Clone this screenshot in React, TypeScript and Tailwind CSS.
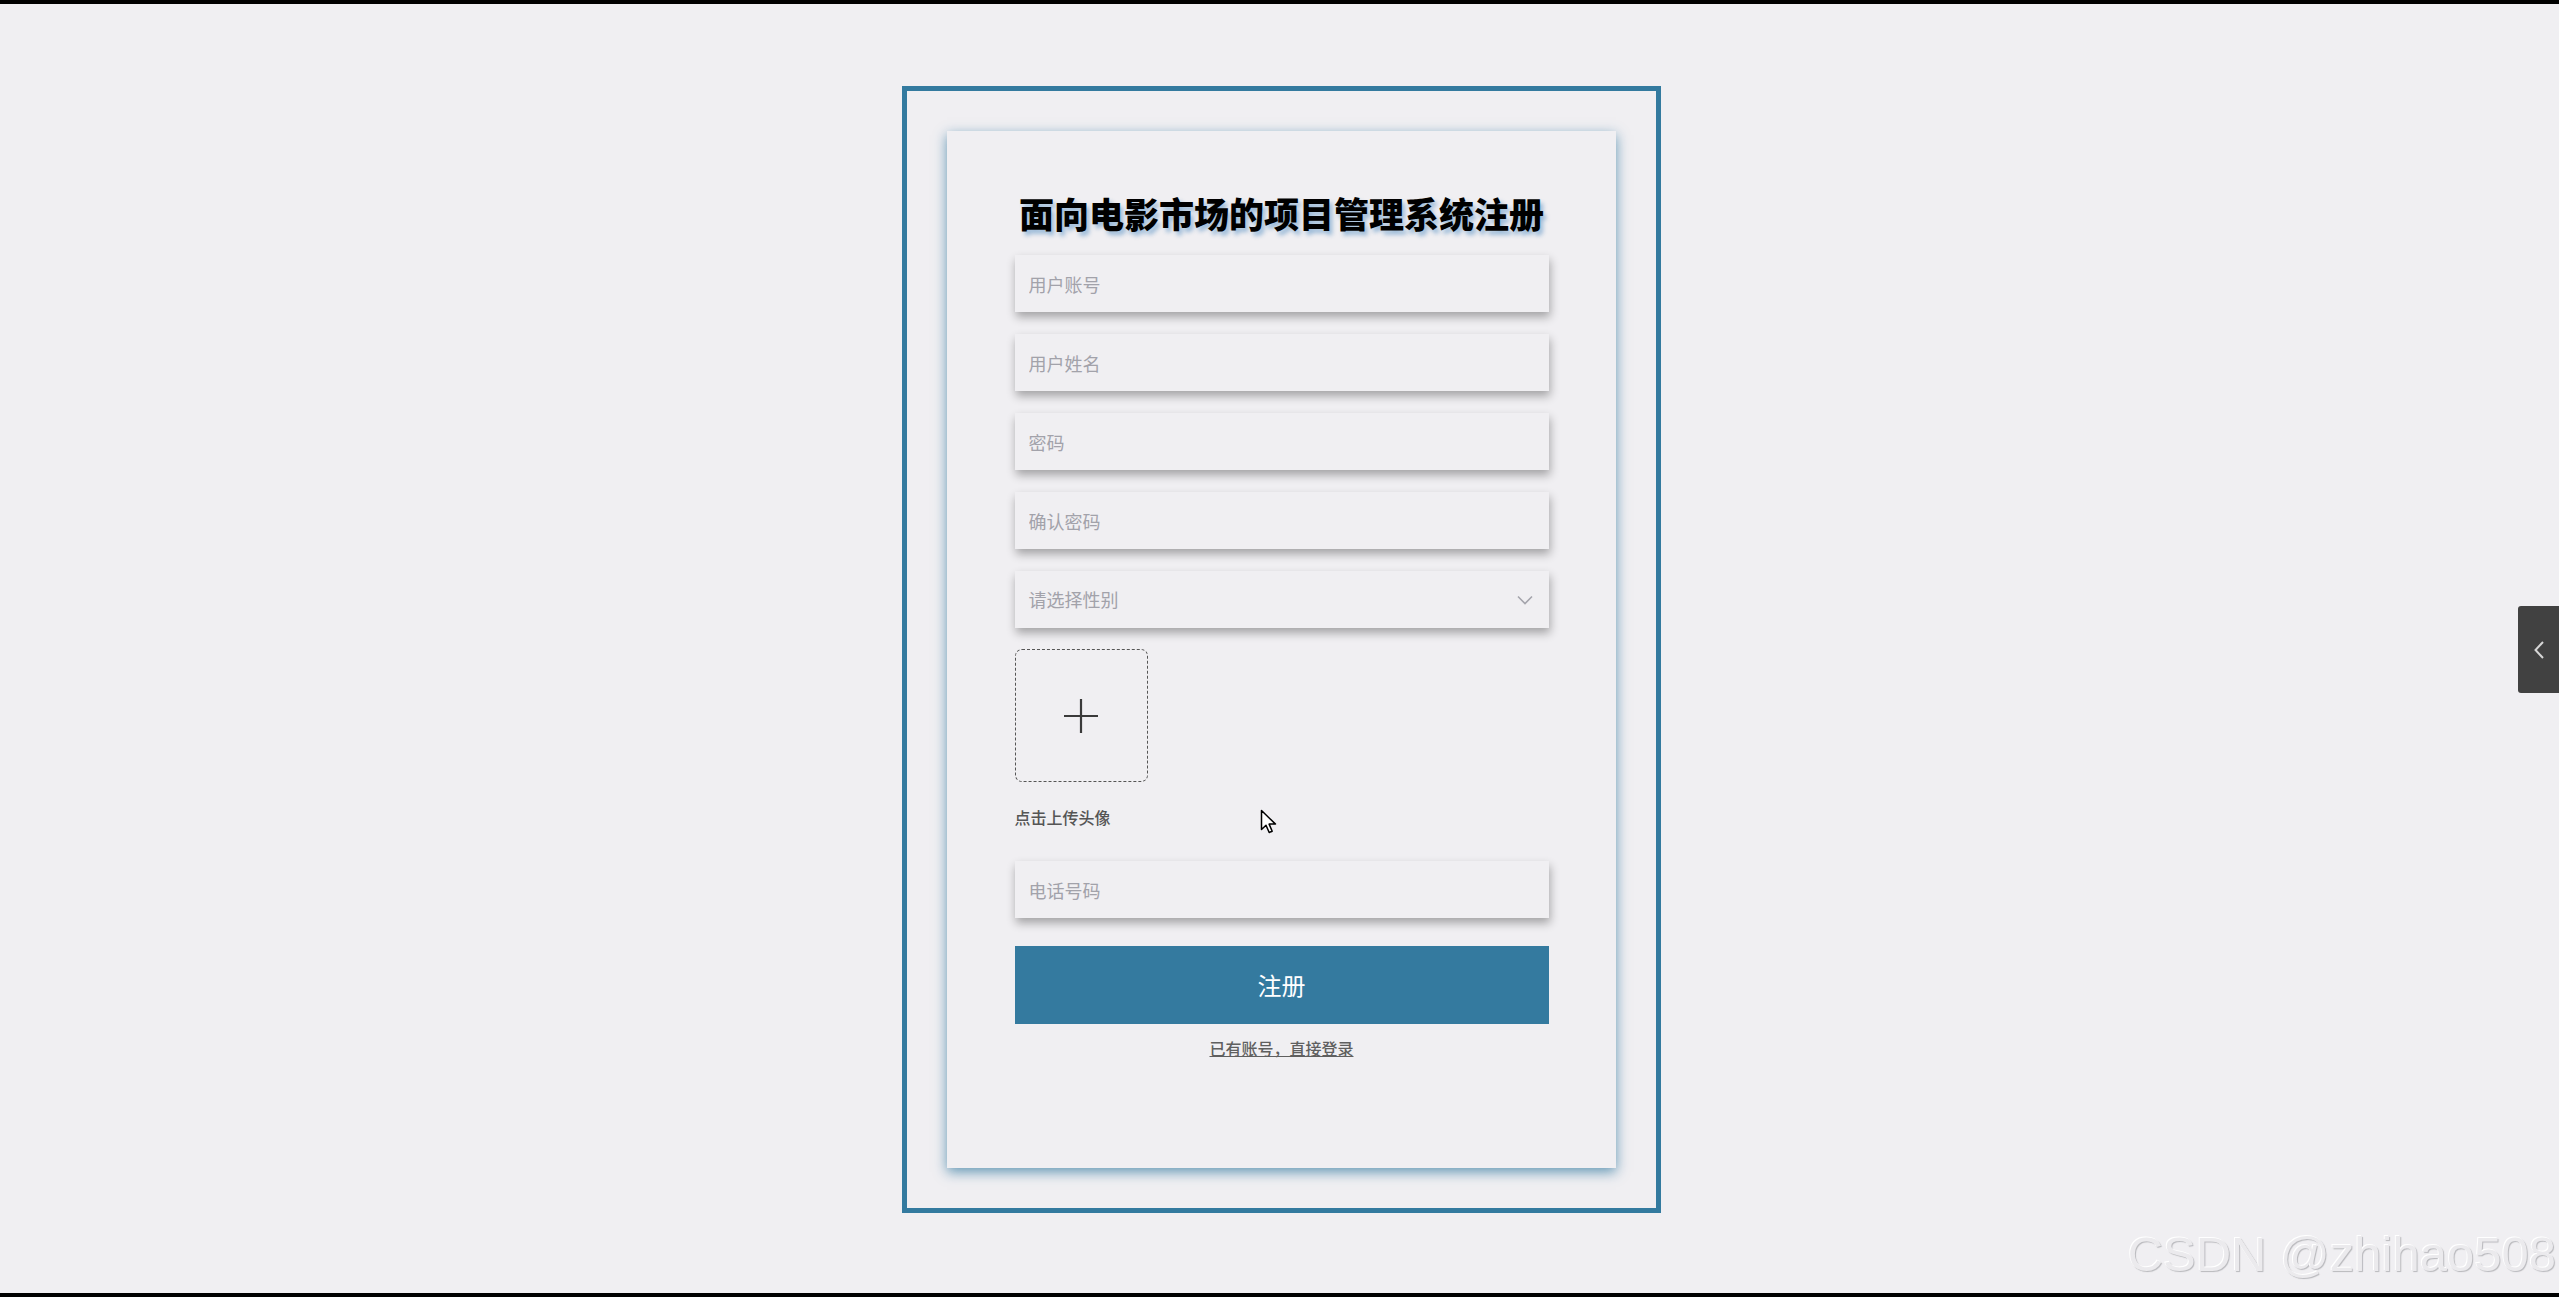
const fields = ['用户账号', '用户姓名', '密码', '确认密码'];

function Field({ placeholder, type = 'text' }: { placeholder: string; type?: string }) {
  return (
    <input
      type={type}
      placeholder={placeholder}
      className="h-[57px] w-full bg-[#f0eff2] px-[14px] text-[18px] text-[#333] outline-none shadow-[1px_5px_9px_rgba(0,0,0,0.32)] placeholder:text-[#a2a2aa]"
    />
  );
}

export default function App() {
  return (
    <div
      className="relative h-[1297px] w-full overflow-hidden border-y-4 border-black bg-[#f0eff2]"
      style={{ fontFamily: '"Noto Sans CJK SC", "Noto Sans", sans-serif' }}
    >
      {/* Outer frame */}
      <div className="ml-[902px] mt-[82px] w-[759px] border-[5px] border-[#337a9f] p-10">
        {/* Card */}
        <div className="h-[1037px] w-full bg-[#f0eff2] pt-[62px] shadow-[0_4px_12px_rgba(51,122,160,0.75)]">
          <div className="mx-auto flex w-[534px] flex-col">
            <h1 className="text-center text-[35px] font-black leading-[40px] text-black [text-shadow:3px_4px_4px_rgba(51,122,183,0.45)]">
              面向电影市场的项目管理系统注册
            </h1>

            <div className="mt-[22px] flex flex-col gap-[22px]">
              {fields.map((f, i) => (
                <Field key={i} placeholder={f} type={i >= 2 ? 'password' : 'text'} />
              ))}
              <div className="flex h-[57px] w-full items-center justify-between bg-[#f0eff2] pl-[14px] pr-[16px] shadow-[1px_5px_9px_rgba(0,0,0,0.32)]">
                <span className="text-[18px] text-[#a2a2aa]">请选择性别</span>
                <svg width="16" height="10" viewBox="0 0 16 10">
                  <path d="M1 1.5l7 7 7-7" fill="none" stroke="#a4a4ac" strokeWidth="1.6" />
                </svg>
              </div>
            </div>

            {/* Avatar upload */}
            <div className="mt-[21px] flex size-[133px] items-center justify-center rounded-[7px] border border-dashed border-[#555]">
              <svg width="36" height="36" viewBox="0 0 36 36">
                <path d="M18 1v34M1 18h34" stroke="#3a3a3a" strokeWidth="2.2" />
              </svg>
            </div>
            <p className="mt-[23px] text-[16px] font-medium leading-6 text-[#555]">点击上传头像</p>

            <div className="mt-[32px]">
              <Field placeholder="电话号码" />
            </div>

            <button className="mt-[28px] h-[78px] w-full bg-[#347a9f] text-[24px] text-white">注册</button>

            <a href="#" className="mt-[12px] self-center text-[16px] font-medium leading-6 text-[#5f5f5f] underline">
              已有账号，直接登录
            </a>
          </div>
        </div>
      </div>

      {/* Mouse cursor */}
      <svg className="absolute left-[1260px] top-[805px]" width="18" height="26" viewBox="0 0 18 26">
        <path
          d="M1.5 1.5v19l4.5-4.3 3.2 7.3 3-1.3-3.1-7.1h6.4z"
          fill="#fff"
          stroke="#000"
          strokeWidth="1.5"
          strokeLinejoin="round"
        />
      </svg>

      {/* Side tab */}
      <div className="absolute right-0 top-[602px] flex h-[87px] w-[41px] items-center justify-center rounded-l-[3px] bg-[#414141]">
        <svg width="12" height="20" viewBox="0 0 12 20">
          <path d="M10 2l-7.5 8 7.5 8" fill="none" stroke="#d6d6d6" strokeWidth="2" />
        </svg>
      </div>

      {/* Watermark */}
      <div
        className="absolute bottom-[14px] right-[3px] text-[49px] leading-none text-[#ebeaed] [text-shadow:-1px_-1px_0_#fff,1px_1px_1px_#b8b8bc]"
        style={{ fontFamily: '"Liberation Sans", Arial, sans-serif' }}
      >
        CSDN @zhihao508
      </div>
    </div>
  );
}
